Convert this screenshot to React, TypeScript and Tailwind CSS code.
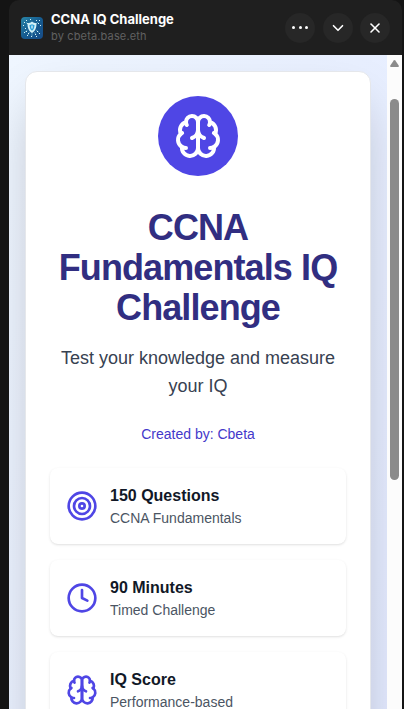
import React from 'react';
import { ChevronDown, Clock, X } from 'lucide-react';

type IconProps = { className?: string; strokeWidth?: number };

const BrainIcon: React.FC<IconProps> = ({ className, strokeWidth = 2 }) => (
  <svg
    viewBox="0 0 24 24"
    fill="none"
    stroke="currentColor"
    strokeWidth={strokeWidth}
    strokeLinecap="round"
    strokeLinejoin="round"
    className={className}
  >
    <path d="M12 5a3 3 0 1 0-5.997.125 4 4 0 0 0-2.526 5.77 4 4 0 0 0 .556 6.588A4 4 0 1 0 12 18Z" />
    <path d="M12 5a3 3 0 1 1 5.997.125 4 4 0 0 1 2.526 5.77 4 4 0 0 1-.556 6.588A4 4 0 1 1 12 18Z" />
    <path d="M15 13a4.5 4.5 0 0 1-3-4 4.5 4.5 0 0 1-3 4" />
    <path d="M17.599 6.5a3 3 0 0 0 .399-1.375" />
    <path d="M6.003 5.125A3 3 0 0 0 6.401 6.5" />
    <path d="M3.477 10.896a4 4 0 0 1 .585-.396" />
    <path d="M19.938 10.5a4 4 0 0 1 .585.396" />
    <path d="M6 18a4 4 0 0 1-1.967-.516" />
    <path d="M19.967 17.484A4 4 0 0 1 18 18" />
  </svg>
);

const TargetIcon: React.FC<IconProps> = ({ className }) => (
  <svg viewBox="0 0 24 24" fill="none" stroke="currentColor" strokeWidth="2" className={className}>
    <circle cx="12" cy="12" r="10" />
    <circle cx="12" cy="12" r="6" />
    <circle cx="12" cy="12" r="2" />
  </svg>
);

// Shield on a circuit board
const AppLogo = () => (
  <svg viewBox="0 0 22 22" className="size-[22px] shrink-0 rounded">
    <defs>
      <linearGradient id="logo-bg" x1="0" y1="0" x2="1" y2="1">
        <stop offset="0" stopColor="#2a87a8" />
        <stop offset="0.5" stopColor="#155b90" />
        <stop offset="1" stopColor="#174b87" />
      </linearGradient>
    </defs>
    <rect width="22" height="22" fill="url(#logo-bg)" />
    <g stroke="#7fc4d8" strokeWidth="0.6" fill="none">
      <path d="M7 7 5 5.500M6.500 13l-2.500 2M8.500 15 7 18M11 16v3.500M13.500 15l1.500 3M15 13l3 2.500M15 7l2-2" />
    </g>
    <g fill="#d8f5f6">
      <rect x="3" y="5" width="1" height="1" />
      <rect x="5" y="3" width="1" height="1" />
      <rect x="6" y="6" width="1" height="1" />
      <rect x="9" y="2" width="1" height="1" />
      <rect x="15" y="3" width="1" height="1" />
      <rect x="18" y="3" width="1" height="1" />
      <rect x="17" y="6" width="1" height="1" />
      <rect x="2" y="8" width="1" height="1" />
      <rect x="19" y="8" width="1" height="1" />
      <rect x="4" y="11" width="1" height="1" />
      <rect x="3" y="15" width="1" height="1" />
      <rect x="5" y="14" width="1" height="1" />
      <rect x="7" y="16" width="1" height="1" />
      <rect x="6" y="18" width="1" height="1" />
      <rect x="10" y="19" width="1" height="1" />
      <rect x="14" y="17" width="1" height="1" />
      <rect x="15" y="19" width="1" height="1" />
      <rect x="16" y="14" width="1" height="1" />
      <rect x="18" y="16" width="1" height="1" />
    </g>
    <path d="M11 4.500c1.200 1.100 2.700 1.600 4.500 1.700 0 4.500-1 7.800-4.500 9.800-3.500-2-4.500-5.300-4.500-9.800 1.800-.1 3.300-.6 4.500-1.700Z" fill="#d3f1f7" />
    <path d="M11 7.200c.8.500 1.500.8 2.500.9-.1 2.700-.7 4.400-2.500 5.700-1.800-1.300-2.400-3-2.500-5.700 1-.1 1.700-.4 2.500-.9Z" fill="#2b9fd8" />
    <path d="M11 8.500v3" stroke="#f0fcff" strokeWidth="1.200" />
  </svg>
);

const stats = [
  { icon: TargetIcon, title: '150 Questions', text: 'CCNA Fundamentals' },
  { icon: Clock, title: '90 Minutes', text: 'Timed Challenge' },
  { icon: BrainIcon, title: 'IQ Score', text: 'Performance-based' },
];

const headerButton = 'flex size-[30px] items-center justify-center rounded-full bg-[#272727] text-white';

const Header = () => (
  <header className="flex h-[55px] shrink-0 items-center rounded-t-[10px] bg-[#1f1f1f] pr-3 pl-3 font-['Inter',sans-serif]">
    <AppLogo />
    <div className="ml-2 flex-1">
      <h2 className="text-[13px] leading-[17px] font-bold text-white">CCNA IQ Challenge</h2>
      <p className="text-[11px] leading-4 tracking-[0.15px] text-[#616161]">by cbeta.base.eth</p>
    </div>
    <div className="flex gap-[7.5px]">
      <button className={headerButton} aria-label="More">
        <span className="flex gap-[3.500px]">
          <span className="size-[3px] rounded-full bg-white" />
          <span className="size-[3px] rounded-full bg-white" />
          <span className="size-[3px] rounded-full bg-white" />
        </span>
      </button>
      <button className={headerButton} aria-label="Minimize">
        <ChevronDown className="size-[18px]" strokeWidth={2.2} />
      </button>
      <button className={headerButton} aria-label="Close">
        <X className="size-4" strokeWidth={2.4} />
      </button>
    </div>
  </header>
);

const Scrollbar = () => (
  <div className="flex w-[15px] shrink-0 flex-col items-center bg-[#fcfcfc] pt-[5px]">
    <svg viewBox="0 0 9 7" className="h-[7px] w-[9px]" fill="#8b8b8b">
      <path d="M3.700.600Q4.500-.4 5.300.600L8.700 5.400Q9.300 7 8 7H1Q-.3 7 .3 5.400Z" />
    </svg>
    <div className="mt-8 h-[381px] w-[9px] rounded-full bg-[#8b8b8b]" />
  </div>
);

export default function App() {
  return (
    <div className="flex h-[709px] w-[404px] overflow-hidden bg-[#141414] pr-0.5 pl-[9px] font-['Liberation_Sans',Arial,sans-serif]">
      <div className="flex min-w-0 flex-1 flex-col">
        <Header />
        <div className="flex min-h-0 flex-1">
          <main className="min-w-0 flex-1 overflow-hidden">
            <div className="h-[1032px] bg-linear-to-br from-[#eff6ff] to-[#e0e7ff] p-4">
              <div className="h-full rounded-xl border border-gray-200 bg-white p-6 shadow-[0_25px_50px_-12px_rgba(0,0,0,0.25)]">
                <div className="mx-auto flex size-20 items-center justify-center rounded-full bg-[#4f46e5]">
                  <BrainIcon className="size-12 text-white" />
                </div>
                <h1 className="mt-8 text-center text-4xl font-bold tracking-tight text-[#312e81]">
                  CCNA Fundamentals IQ Challenge
                </h1>
                <p className="mt-4 text-center text-lg text-[#374151]">Test your knowledge and measure your IQ</p>
                <p className="mt-6 text-center text-sm text-[#4338ca]">Created by: Cbeta</p>
                <div className="mt-6 flex flex-col gap-4">
                  {stats.map(({ icon: Icon, title, text }) => (
                    <div
                      key={title}
                      className="flex items-center gap-3 rounded-lg bg-white p-4 shadow-[0_1px_3px_0_rgba(0,0,0,0.1),0_1px_2px_-1px_rgba(0,0,0,0.1)]"
                    >
                      <Icon className="size-8 shrink-0 text-[#4f46e5]" />
                      <div>
                        <h3 className="text-base font-semibold text-[#111827]">{title}</h3>
                        <p className="text-sm text-[#4b5563]">{text}</p>
                      </div>
                    </div>
                  ))}
                </div>
              </div>
            </div>
          </main>
          <Scrollbar />
        </div>
      </div>
    </div>
  );
}
